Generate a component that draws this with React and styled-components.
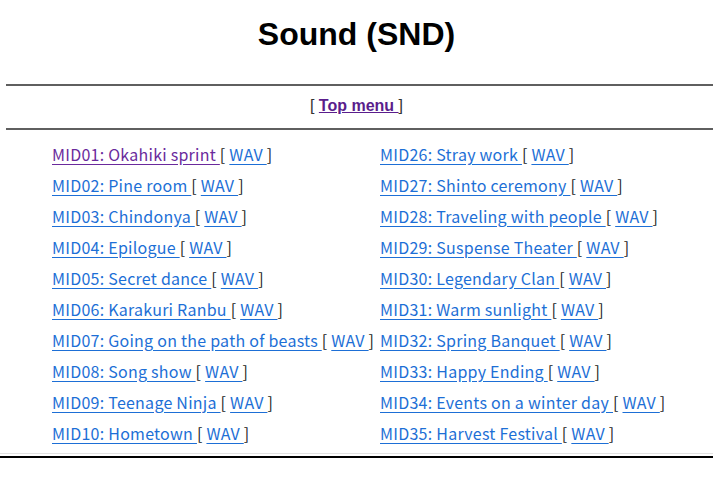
import React from "react";
import styled, { createGlobalStyle } from "styled-components";

const GlobalStyle = createGlobalStyle`
  html, body {
    margin: 0;
    padding: 0;
    background: #fff;
  }
  body {
    font-family: "Noto Sans CJK JP", "Noto Sans", sans-serif;
    color: #222;
  }
`;

const left = [
  "MID01: Okahiki sprint",
  "MID02: Pine room",
  "MID03: Chindonya",
  "MID04: Epilogue",
  "MID05: Secret dance",
  "MID06: Karakuri Ranbu",
  "MID07: Going on the path of beasts",
  "MID08: Song show",
  "MID09: Teenage Ninja",
  "MID10: Hometown",
];

const right = [
  "MID26: Stray work",
  "MID27: Shinto ceremony",
  "MID28: Traveling with people",
  "MID29: Suspense Theater",
  "MID30: Legendary Clan",
  "MID31: Warm sunlight",
  "MID32: Spring Banquet",
  "MID33: Happy Ending",
  "MID34: Events on a winter day",
  "MID35: Harvest Festival",
];

const Track = ({ title, visited }) => (
  <Item>
    <TrackLink href="#" $visited={visited}>{title + " "}</TrackLink>
    {"[ "}
    <TrackLink href="#">WAV </TrackLink>
    {"]"}
  </Item>
);

export default function App() {
  return (
    <Page>
      <GlobalStyle />
      <Title>Sound (SND)</Title>
      <Rule />
      <Nav>
        {"[ "}
        <NavLink href="#">Top menu </NavLink>
        {"]"}
      </Nav>
      <Rule />
      <List>
        {left.map((l, i) => (
          <React.Fragment key={i}>
            <Track title={l} visited={i === 0} />
            <Track title={right[i]} />
          </React.Fragment>
        ))}
      </List>
      <Footer />
    </Page>
  );
}

const Page = styled.div`
  display: flex;
  flex-direction: column;
  width: 713px;
`;

const Title = styled.h1`
  margin: 0 0 16px;
  line-height: 68px;
  text-align: center;
  font-family: "Liberation Sans", Arial, sans-serif;
  font-size: 32px;
  font-weight: bold;
  color: #000;
`;

const Rule = styled.div`
  height: 2px;
  margin-left: 6px;
  background: #5f5f5f;
`;

const Nav = styled.div`
  padding: 10px 0 12px;
  line-height: 20px;
  text-align: center;
  font-family: "Liberation Sans", Arial, sans-serif;
  font-size: 16px;
  color: #333;
  white-space: pre;
`;

const NavLink = styled.a`
  color: #5a1d8c;
  font-weight: bold;
  text-decoration: underline;
`;

const List = styled.div`
  display: grid;
  grid-template-columns: 328px 1fr;
  grid-auto-rows: 31px;
  padding: 8px 0 0 52px;
`;

const Item = styled.div`
  display: flex;
  align-items: center;
  white-space: pre;
  font-size: 16px;
  letter-spacing: 0.25px;
  color: #222;
`;

const TrackLink = styled.a`
  color: ${(p) => (p.$visited ? "#6a2a9c" : "#1d6fd6")};
  text-decoration: underline;
  text-underline-offset: 3px;
`;

const Footer = styled.div`
  margin-top: 5px;
  height: 1px;
  padding-bottom: 2px;
  background: #e2e2e2;
  background-clip: content-box;
  border-bottom: 2px solid #000;
`;
